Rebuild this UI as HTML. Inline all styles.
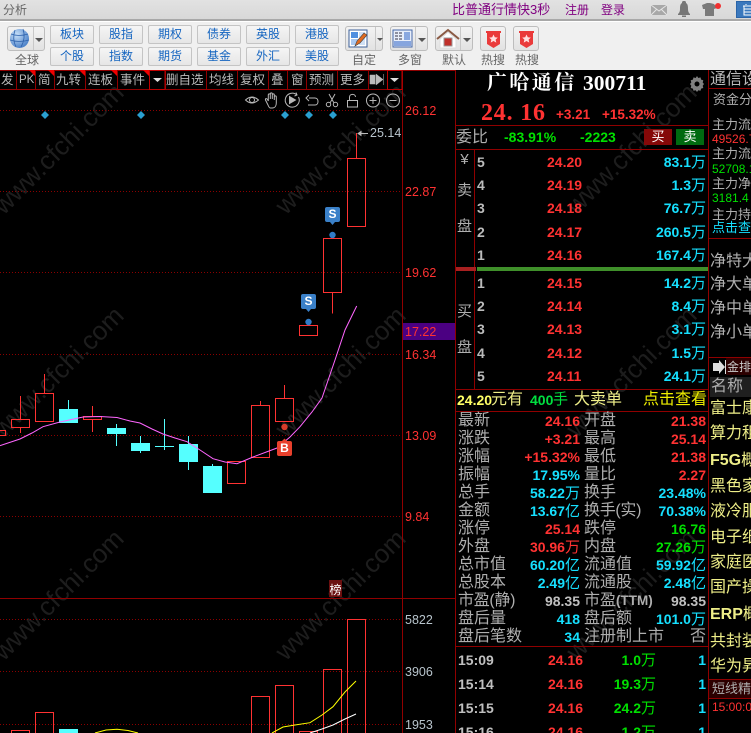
<!DOCTYPE html>
<html lang="zh"><head><meta charset="utf-8"><title>分析</title>
<style>
html,body{margin:0;padding:0;background:#000;width:751px;height:733px;overflow:hidden}
#p{position:relative;width:751px;height:733px;overflow:hidden;background:#000;font-family:"Liberation Sans","WenQuanYi Zen Hei","Noto Sans CJK SC",sans-serif}
#p div,#p span.a,#p b.a{position:absolute;white-space:nowrap}
svg{position:absolute;left:0;top:0}
.wm{color:#1d1d1d;font-size:26px;line-height:30px;transform-origin:0 100%;transform:rotate(-45deg);font-family:"Liberation Sans",sans-serif}
.btn{background:linear-gradient(#f5f5f5,#e6e6e6);border:1px solid #c4c4c4;border-radius:2px;box-sizing:border-box;height:19px;width:44px;color:#1565c0;font-size:12px;line-height:17px;text-align:center}
.ib{background:linear-gradient(#f3f3f3,#e2e2e2);border:1px solid #bdbdbd;border-radius:3px;box-sizing:border-box;height:25px;top:26px}
.lb{color:#666;font-size:12px;line-height:16px;top:52px}
.tb{color:#bbb;font-size:12.5px;line-height:16px;top:72px}
.ax{color:#ff3232;font-size:12.5px;line-height:14px;left:405px;font-family:"Liberation Sans",sans-serif}
.axg{color:#b8c4cc;font-size:12.5px;line-height:14px;left:405px}
.o{color:#bbb;font:bold 14px/16px "Liberation Sans",sans-serif;left:477px}
.pr{color:#ff3232;font:bold 14px/16px "Liberation Sans",sans-serif;left:547px}
.v{color:#16e0ff;font:bold 14px/16px "Liberation Sans",sans-serif;right:45px}
.v i,.q i{font:normal 15px/16px "WenQuanYi Zen Hei","Noto Sans CJK SC",sans-serif}
.sd{color:#b0b0b0;font-size:15px;line-height:18px;left:456px;width:17px;text-align:center}
.l{color:#aeaeae;font-size:16px;line-height:18px}
.q{font:bold 14px/18px "Liberation Sans",sans-serif}
.R{right:171px}.RR{right:45px}
.re{color:#ff3232}.cy{color:#16e0ff}.gr{color:#00e000}.gy{color:#c0c0c0}
.s{color:#aeaeae;font-size:13px;line-height:15px;left:712px}
.n{color:#aeaeae;font-size:16px;line-height:18px;left:710px}
.y{color:#eeee88;font-size:16px;line-height:18px;left:710px}
.y b{font-family:"Liberation Sans",sans-serif}
</style></head><body><div id="p">

<!-- top chrome -->
<div style="left:0;top:0;width:751px;height:19px;background:linear-gradient(#e2e2e2,#d8d8d8)"></div>
<div style="left:0;top:19px;width:751px;height:2px;background:#a8a8a8"></div>
<div style="left:0;top:21px;width:751px;height:49px;background:#f0f0f0;border-top:1px solid #fff;box-sizing:border-box"></div>
<div style="left:3px;top:1px;color:#666;font-size:12px;line-height:18px">分析</div>
<div style="left:452px;top:2px;color:#800080;font-size:13px;line-height:16px">比普通行情快3秒</div>
<div style="left:565px;top:2px;color:#800080;font-size:12px;line-height:16px">注册</div>
<div style="left:601px;top:2px;color:#800080;font-size:12px;line-height:16px">登录</div>
<svg width="751" height="22">
 <rect x="651" y="5" width="16" height="10" fill="#a8a8a8"/><path d="M651 5l8 6 8-6M651 15l6-6M667 15l-6-6" fill="none" stroke="#e6e6e6"/>
 <path d="M684 1c2 0 2 1 2 2 2 1 2 4 2 6 0 3 1 4 2 5v1h-12v-1c1-1 2-2 2-5 0-2 0-5 2-6 0-1 0-2 2-2zM682 15.500h4v1.500h-4z" fill="#777"/>
 <path d="M702 5l5-2h3l4 1 3 4-3 1v7h-9v-7l-2 0z" fill="#7a7a7a"/><circle cx="718" cy="6" r="3" fill="#f03030"/>
 <rect x="736" y="1" width="15" height="17" fill="#2a64a8"/><rect x="737" y="2" width="14" height="15" fill="#3a78bd"/>
 <path d="M746 4v1M743 6h8M744 6v9h7M744 9h7M744 12h7" stroke="#fff" fill="none"/>
</svg>

<!-- toolbar -->
<div class="btn" style="left:50px;top:25px">板块</div><div class="btn" style="left:99px;top:25px">股指</div><div class="btn" style="left:148px;top:25px">期权</div><div class="btn" style="left:197px;top:25px">债券</div><div class="btn" style="left:246px;top:25px">英股</div><div class="btn" style="left:295px;top:25px">港股</div>
<div class="btn" style="left:50px;top:47px">个股</div><div class="btn" style="left:99px;top:47px">指数</div><div class="btn" style="left:148px;top:47px">期货</div><div class="btn" style="left:197px;top:47px">基金</div><div class="btn" style="left:246px;top:47px">外汇</div><div class="btn" style="left:295px;top:47px">美股</div>

<div class="ib" style="left:7px;width:38px"></div>
<div class="ib" style="left:345px;width:38px"></div>
<div class="ib" style="left:390px;width:38px"></div>
<div class="ib" style="left:435px;width:38px"></div>
<div class="ib" style="left:480px;width:26px"></div>
<div class="ib" style="left:513px;width:26px"></div>
<svg width="751" height="70">
 <defs><radialGradient id="g" cx=".35" cy=".3" r=".8"><stop offset="0" stop-color="#c8e0f8"/><stop offset="1" stop-color="#3f78c4"/></radialGradient></defs>
 <path d="M33.500 27v23M375.500 27v23M415.500 27v23M460.500 27v23" stroke="#c8c8c8"/>
 <path d="M35 38h8l-4 4zM377 38h6l-3 3zM418 38h8l-4 4zM463 38h8l-4 4z" fill="#555"/>
 <circle cx="19.500" cy="38.500" r="9.500" fill="url(#g)"/>
 <path d="M11 34q8 3 17 0M10 40q9 3 19 0M15 30q-3 9 1 17M23 29q3 9-2 18" fill="none" stroke="#2f63ad" stroke-width=".8"/>
 <!-- custom -->
 <rect x="349" y="30" width="18" height="17" fill="#fff" stroke="#3b5f98"/><rect x="351" y="32" width="7" height="6" fill="#4f8fe0"/><rect x="351" y="39" width="7" height="6" fill="#a9c8f0"/><rect x="359" y="32" width="6" height="13" fill="#cfe0f5"/>
 <path d="M355 46l2-5 7-8 3 2-7 8z" fill="#e06a20" stroke="#444" stroke-width=".6"/>
 <!-- multi -->
 <rect x="393" y="30" width="19" height="17" fill="#e8eefa" stroke="#4668a8"/><path d="M395 33h3M395 36h3M395 39h3M399 33h3M399 36h3M399 39h3" stroke="#334" fill="none"/>
 <rect x="404" y="32" width="6" height="8" fill="#8aa8e0"/><rect x="394" y="41" width="17" height="5" fill="#86a5de"/>
 <!-- home -->
 <path d="M437 39l11-9 11 9" fill="none" stroke="#8a5a44" stroke-width="2"/><path d="M440 39l8-7 8 7v9h-16z" fill="#fff" stroke="#ddd"/><rect x="444" y="38" width="8" height="8" fill="#c0302a" stroke="#999"/>
 <!-- ribbons -->
 <g id="r1"><path d="M486 31h15v2h-1v11l-6.500 4-6.500-4v-11h-1z" fill="#ea3a3a"/><path d="M493.500 34.500l1.300 2.800 3 .3-2.200 2 .7 3-2.800-1.600-2.800 1.600.7-3-2.200-2 3-.3z" fill="#ffe0e0"/></g>
 <g transform="translate(33)"><path d="M486 31h15v2h-1v11l-6.500 4-6.500-4v-11h-1z" fill="#ea3a3a"/><path d="M493.500 34.500l1.300 2.800 3 .3-2.200 2 .7 3-2.800-1.600-2.800 1.600.7-3-2.200-2 3-.3z" fill="#ffe0e0"/></g>
</svg>
<div class="lb" style="left:15px">全球</div><div class="lb" style="left:352px">自定</div><div class="lb" style="left:398px">多窗</div><div class="lb" style="left:442px">默认</div><div class="lb" style="left:481px">热搜</div><div class="lb" style="left:515px">热搜</div>

<!-- watermarks -->
<div class="wm" style="left:8px;top:190px">www.cfchi.com</div>
<div class="wm" style="left:290px;top:190px">www.cfchi.com</div>
<div class="wm" style="left:581px;top:190px">www.cfchi.com</div>
<div class="wm" style="left:8px;top:413px">www.cfchi.com</div>
<div class="wm" style="left:290px;top:413px">www.cfchi.com</div>
<div class="wm" style="left:581px;top:413px">www.cfchi.com</div>
<div class="wm" style="left:8px;top:636px">www.cfchi.com</div>
<div class="wm" style="left:290px;top:636px">www.cfchi.com</div>
<div class="wm" style="left:581px;top:636px">www.cfchi.com</div>

<!-- chart -->
<svg width="751" height="733">
 <g stroke="#8b0000" stroke-dasharray="1 2" fill="none">
  <path d="M0 110.500H402M0 191.500H402M0 272.500H402M0 354.500H402M0 435.500H402M0 516.500H402M0 619.500H402M0 671.500H402M0 724.500H402"/>
 </g>
 <!-- frame lines -->
 <g stroke="#900000" fill="none">
  <path d="M0 70.500H455M0 89.500H402M402.500 70V733M455.500 70V733M708.500 70V733M0 598.500H455"/>
  <path d="M16.500 70v20M35.500 70v20M54.500 70v20M85.500 70v20M117.500 70v20M149.500 70v20M165.500 70v20M206.500 70v20M237.500 70v20M268.500 70v20M287.500 70v20M306.500 70v20M337.500 70v20M368.500 70v20M387.500 70v20"/>
  <path d="M456 125.500H708M456 149.500H708M456 389.500H708M456 411.500H708M456 646.500H708M474.500 149V389M709 88.500H751M709 238.500H751M709 357.500H751M709 679.500H751M709 698.500H751"/>
 </g>
 <path d="M149.500 70.500h15.500v19h-15.500zM387.500 70.500h14.500v19h-14.500z" fill="none" stroke="#c00000"/>
 <path d="M29 70h6v6zM48 70h6v6zM79 70h6v6zM111 70h6v6zM143 70h6v6z" fill="#f00000"/>
 <path d="M153 78h9l-4.500 4z" fill="#ddd"/><path d="M390 78h9l-4.500 4z" fill="#ddd"/>
 <path d="M370 75h5v9h-5zM376 74l7 5.500-7 5.500zM383.500 74v11" fill="#bbb" stroke="#bbb" stroke-width=".5"/>

 <!-- chart tools -->
 <g fill="none" stroke="#b8b8b8" stroke-width="1">
  <path d="M245.500 100q6.500-6 13 0q-6.500 6-13 0z"/><circle cx="252" cy="100" r="2.500"/>
  <path d="M268 105l-2.500-5c-.5-1.500 1-2 2-.5l.8 1.500v-6c0-1.500 2-1.500 2 0v4-5c0-1.500 2-1.500 2 0v5-4c0-1.500 2-1.500 2 0v5-3c0-1.500 2-1.500 2 0v6c0 3-1.500 5-4 5h-2c-1 0-1.500-1-2.300-3z"/>
  <path d="M297 95a7 7 0 1 0 1.500 2M296 92.500l1 2.500-2.500 1"/><path d="M289.500 96.500l6 3.500-6 3.500z" fill="#b8b8b8"/>
  <path d="M309 98h6c4 0 4 7 0 7h-7M309 95l-3 3 3 3" transform="translate(0,0)"/>
  <circle cx="328.500" cy="104.500" r="2.200"/><circle cx="335.500" cy="104.500" r="2.200"/><path d="M330 103l5-9M334 103l-5-9"/>
  <rect x="347.500" y="100.500" width="10" height="6.500"/><path d="M349.500 100v-3c0-3.500 6-3.500 6 0"/>
  <circle cx="373" cy="100.500" r="6.500"/><path d="M369.500 100.500h7M373 97v7"/>
  <circle cx="393" cy="100.500" r="6.500"/><path d="M389.500 100.500h7"/>
 </g>
 <g fill="#2a9fd0"><path d="M45 111l4 4-4 4-4-4zM141 111l4 4-4 4-4-4zM285 111l4 4-4 4-4-4zM309 111l4 4-4 4-4-4zM333 111l4 4-4 4-4-4z"/></g>

 <!-- candles -->
 <g fill="none" stroke="#ff3232" shape-rendering="crispEdges">
  <path d="M-20 430.500h25.500v5h-25.500z"/>
  <rect x="11.500" y="419.500" width="18" height="8"/><path d="M20.500 396v23.500M20.500 427.500v5.500"/>
  <rect x="35.500" y="393.500" width="18" height="28"/><path d="M44.500 374v19.500"/>
  <rect x="83.500" y="416.500" width="18" height="3"/><path d="M92.500 406v10.500M92.500 419.500v12.500"/>
  <rect x="227.500" y="461.500" width="18" height="22"/>
  <rect x="251.500" y="405.500" width="18" height="52"/><path d="M260.500 401v4.500"/>
  <rect x="275.500" y="398.500" width="18" height="23"/><path d="M284.500 385v13.500"/>
  <rect x="299.500" y="325.500" width="18" height="10"/>
  <rect x="323.500" y="238.500" width="18" height="54"/><path d="M332.500 292.500v21"/>
  <rect x="347.500" y="158.500" width="18" height="68"/><path d="M356.500 133v25.500"/>
  <!-- volume -->
  <rect x="11.500" y="730.500" width="18" height="20"/>
  <rect x="35.500" y="712.500" width="18" height="40"/>
  <rect x="251.500" y="696.500" width="18" height="60"/>
  <rect x="275.500" y="685.500" width="18" height="70"/>
  <rect x="299.500" y="731.500" width="18" height="20"/>
  <rect x="323.500" y="669.500" width="18" height="90"/>
  <rect x="347.500" y="619.500" width="18" height="140"/>
 </g>
 <g fill="#55ffff" shape-rendering="crispEdges">
  <rect x="59" y="409" width="19" height="14"/><rect x="68" y="400" width="1" height="9"/>
  <rect x="107" y="428" width="19" height="6"/><rect x="116" y="424" width="1" height="22"/>
  <rect x="131" y="443" width="19" height="8"/><rect x="140" y="436" width="1" height="17"/>
  <rect x="155" y="446" width="19" height="1"/><rect x="164" y="419" width="1" height="31"/>
  <rect x="179" y="444" width="19" height="18"/><rect x="188" y="436" width="1" height="34"/>
  <rect x="203" y="466" width="19" height="27"/><rect x="212" y="464" width="1" height="2"/>
  <rect x="59" y="729" width="19" height="4"/>
 </g>
 <path d="M0 445.700L20 439 32 433 43 426.700 60 422 83 417 100 416.500 117 417.500 130 421 140 423 152 429 163 434 175 438 187 441.700 200 450 213 458.700 225 462 237 463.700 253 457 277 448 290 437 300 426.700 312 412 322 398 335 360 345 330 356.700 306" fill="none" stroke="#ff66ff"/>
 <path d="M95 733L106 730 117 729.300 128 730.500 138 733M272 733L283 727 295 725 310 722.700 322 715 333 706.700 345 692 356 681" fill="none" stroke="#ffff00"/>
 <path d="M310 733L322 729 333 725 345 719 356 714" fill="none" stroke="#fff"/>

 <!-- markers -->
 <circle cx="284.500" cy="427" r="3.200" fill="#d63c2a"/>
 <rect x="277" y="441" width="15" height="15" rx="2" fill="#e8402c"/><path d="M284.500 438.500l2.500 2.500h-5z" fill="#e8402c"/>
 <circle cx="308.500" cy="322" r="3.200" fill="#2f7cc8"/><circle cx="332.500" cy="235" r="3.200" fill="#2f7cc8"/>
 <rect x="301" y="294" width="15" height="15" rx="2" fill="#3a80c8"/><path d="M306 309h5l-2.500 3z" fill="#3a80c8"/>
 <rect x="325" y="207" width="15" height="15" rx="2" fill="#3a80c8"/><path d="M330 222h5l-2.500 3z" fill="#3a80c8"/>
 <path d="M358 133.500h10M358 133.500l3-2v4z" stroke="#bbb" fill="#bbb"/>
 <rect x="403" y="323" width="52" height="17" fill="#4b0082"/>

 <!-- panel misc -->
 <rect x="456" y="267" width="20" height="4" fill="#a82020"/><rect x="477" y="267" width="231" height="4" fill="#3f8f2a"/>
 <path d="M697 76l1.300 2 2.200-.6.600 2.200 2.200.6-.6 2.300 1.300 1.500-1.300 1.800.6 2.200-2.200.6-.6 2.200-2.200-.6-1.300 1.800-1.300-1.800-2.200.6-.6-2.200-2.200-.6.600-2.200-1.300-1.800 1.300-1.500-.6-2.300 2.200-.6.600-2.200 2.200.6z" fill="#808080"/><circle cx="697" cy="84" r="2.500" fill="#000"/>
 <rect x="644" y="129" width="28" height="16" fill="#850808"/><rect x="676" y="129" width="28" height="16" fill="#006a10"/>
 <rect x="726" y="358" width="25" height="17" fill="#2c0000"/>
 <rect x="710" y="377" width="41" height="20" fill="#1f1f1f"/>
 <rect x="709" y="680" width="42" height="18" fill="#2c0000"/>
 <path d="M713 363h6v-3l6 7-6 7v-3h-6z" fill="#ddd"/><path d="M725.500 360v14" stroke="#ddd"/>
</svg>

<!-- tabs -->
<div class="tb" style="left:1px">发</div><div class="tb" style="left:19px;font-size:11.5px">PK</div><div class="tb" style="left:38px">简</div><div class="tb" style="left:56px">九转</div><div class="tb" style="left:88px">连板</div><div class="tb" style="left:120px">事件</div><div class="tb" style="left:166px">删自选</div><div class="tb" style="left:209px">均线</div><div class="tb" style="left:240px">复权</div><div class="tb" style="left:271px">叠</div><div class="tb" style="left:291px">窗</div><div class="tb" style="left:309px">预测</div><div class="tb" style="left:340px">更多</div>

<!-- axis -->
<div class="ax" style="top:104px">26.12</div><div class="ax" style="top:185px">22.87</div><div class="ax" style="top:266px">19.62</div><div class="ax" style="top:325px">17.22</div><div class="ax" style="top:348px">16.34</div><div class="ax" style="top:429px">13.09</div><div class="ax" style="top:510px">9.84</div>
<div class="axg" style="top:613px">5822</div><div class="axg" style="top:665px">3906</div><div class="axg" style="top:718px">1953</div>
<div style="left:370px;top:126px;color:#b8c4cc;font-size:12.5px;line-height:14px">25.14</div>
<div style="left:279px;top:441px;width:11px;text-align:center;color:#fff;font:bold 12px/15px 'Liberation Sans',sans-serif">B</div>
<div style="left:303px;top:294px;width:11px;text-align:center;color:#fff;font:bold 12px/15px 'Liberation Sans',sans-serif">S</div>
<div style="left:327px;top:207px;width:11px;text-align:center;color:#fff;font:bold 12px/15px 'Liberation Sans',sans-serif">S</div>
<div style="left:329px;top:580px;width:13px;height:17px;background:#6b0f0f;color:#fff;font-size:12px;line-height:20px;text-align:center">榜</div>

<!-- header -->
<div style="left:487px;top:71px;color:#fff;font:bold 20px/24px 'Liberation Serif','Noto Serif CJK SC',serif;letter-spacing:2.400px">广哈通信</div>
<div style="left:583px;top:71px;color:#fff;font:bold 21.500px/24px 'Liberation Serif',serif">300711</div>
<div style="left:481px;top:99px;color:#ff3232;font:bold 24px/28px 'Liberation Serif',serif;letter-spacing:.8px">24. 16</div>
<div style="left:556px;top:107px;color:#ff3232;font:bold 13.500px/16px 'Liberation Sans',sans-serif">+3.21</div>
<div style="left:602px;top:107px;color:#ff3232;font:bold 13.500px/16px 'Liberation Sans',sans-serif">+15.32%</div>

<div style="left:456px;top:129px;color:#aeaeae;font-size:16px;line-height:18px">委比</div>
<div style="left:504px;top:129px;color:#00e000;font:bold 14px/16px 'Liberation Sans',sans-serif">-83.91%</div>
<div style="left:580px;top:129px;color:#00e000;font:bold 14px/16px 'Liberation Sans',sans-serif">-2223</div>
<div style="left:644px;top:129px;width:28px;text-align:center;color:#fff;font-size:13px;line-height:16px">买</div>
<div style="left:676px;top:129px;width:28px;text-align:center;color:#fff;font-size:13px;line-height:16px">卖</div>

<!-- order book -->
<div class="sd" style="top:151px">¥</div><div class="sd" style="top:182px">卖</div><div class="sd" style="top:218px">盘</div><div class="sd" style="top:303px">买</div><div class="sd" style="top:339px">盘</div>

<div class="o" style="top:154px">5</div><div class="pr" style="top:154px">24.20</div><div class="v" style="top:154px">83.1<i>万</i></div>
<div class="o" style="top:177px">4</div><div class="pr" style="top:177px">24.19</div><div class="v" style="top:177px">1.3<i>万</i></div>
<div class="o" style="top:200px">3</div><div class="pr" style="top:200px">24.18</div><div class="v" style="top:200px">76.7<i>万</i></div>
<div class="o" style="top:224px">2</div><div class="pr" style="top:224px">24.17</div><div class="v" style="top:224px">260.5<i>万</i></div>
<div class="o" style="top:247px">1</div><div class="pr" style="top:247px">24.16</div><div class="v" style="top:247px">167.4<i>万</i></div>
<div class="o" style="top:275px">1</div><div class="pr" style="top:275px">24.15</div><div class="v" style="top:275px">14.2<i>万</i></div>
<div class="o" style="top:298px">2</div><div class="pr" style="top:298px">24.14</div><div class="v" style="top:298px">8.4<i>万</i></div>
<div class="o" style="top:321px">3</div><div class="pr" style="top:321px">24.13</div><div class="v" style="top:321px">3.1<i>万</i></div>
<div class="o" style="top:345px">4</div><div class="pr" style="top:345px">24.12</div><div class="v" style="top:345px">1.5<i>万</i></div>
<div class="o" style="top:368px">5</div><div class="pr" style="top:368px">24.11</div><div class="v" style="top:368px">24.1<i>万</i></div>

<!-- ad row -->
<div style="left:457px;top:392px;color:#ffff66;font:bold 14px/16px 'Liberation Sans',sans-serif">24.20</div>
<div style="left:491px;top:392px;color:#eeee88;font-size:16px;line-height:16px">元有</div>
<div style="left:530px;top:392px;color:#00e040;font:bold 14px/16px 'Liberation Sans',sans-serif">400</div>
<div style="left:553px;top:392px;color:#00e040;font-size:15px;line-height:16px">手</div>
<div style="left:574px;top:392px;color:#eeee88;font-size:16px;line-height:16px">大卖单</div>
<div style="left:643px;top:392px;color:#eeee00;font-size:16px;line-height:16px">点击查看</div>

<!-- stats -->
<div class="l" style="left:458px;top:412px">最新</div><div class="q re R" style="top:412px">24.16</div><div class="l" style="left:584px;top:412px">开盘</div><div class="q re RR" style="top:412px">21.38</div>
<div class="l" style="left:458px;top:430px">涨跌</div><div class="q re R" style="top:430px">+3.21</div><div class="l" style="left:584px;top:430px">最高</div><div class="q re RR" style="top:430px">25.14</div>
<div class="l" style="left:458px;top:448px">涨幅</div><div class="q re R" style="top:448px">+15.32%</div><div class="l" style="left:584px;top:448px">最低</div><div class="q re RR" style="top:448px">21.38</div>
<div class="l" style="left:458px;top:466px">振幅</div><div class="q cy R" style="top:466px">17.95%</div><div class="l" style="left:584px;top:466px">量比</div><div class="q re RR" style="top:466px">2.27</div>
<div class="l" style="left:458px;top:484px">总手</div><div class="q cy R" style="top:484px">58.22<i>万</i></div><div class="l" style="left:584px;top:484px">换手</div><div class="q cy RR" style="top:484px">23.48%</div>
<div class="l" style="left:458px;top:502px">金额</div><div class="q cy R" style="top:502px">13.67<i>亿</i></div><div class="l" style="left:584px;top:502px;letter-spacing:-.3px">换手(实)</div><div class="q cy RR" style="top:502px">70.38%</div>
<div class="l" style="left:458px;top:520px">涨停</div><div class="q re R" style="top:520px">25.14</div><div class="l" style="left:584px;top:520px">跌停</div><div class="q gr RR" style="top:520px">16.76</div>
<div class="l" style="left:458px;top:538px">外盘</div><div class="q re R" style="top:538px">30.96<i>万</i></div><div class="l" style="left:584px;top:538px">内盘</div><div class="q gr RR" style="top:538px">27.26<i>万</i></div>
<div class="l" style="left:458px;top:556px">总市值</div><div class="q cy R" style="top:556px">60.20<i>亿</i></div><div class="l" style="left:584px;top:556px">流通值</div><div class="q cy RR" style="top:556px">59.92<i>亿</i></div>
<div class="l" style="left:458px;top:574px">总股本</div><div class="q cy R" style="top:574px">2.49<i>亿</i></div><div class="l" style="left:584px;top:574px">流通股</div><div class="q cy RR" style="top:574px">2.48<i>亿</i></div>
<div class="l" style="left:458px;top:592px;letter-spacing:-.3px">市盈(静)</div><div class="q gy R" style="top:592px">98.35</div><div class="l" style="left:584px;top:592px">市盈<b style="font:bold 13.500px/18px 'Liberation Sans',sans-serif">(TTM)</b></div><div class="q gy RR" style="top:592px">98.35</div>
<div class="l" style="left:458px;top:610px">盘后量</div><div class="q cy R" style="top:610px">418</div><div class="l" style="left:584px;top:610px">盘后额</div><div class="q cy RR" style="top:610px">101.0<i>万</i></div>
<div class="l" style="left:458px;top:628px">盘后笔数</div><div class="q cy R" style="top:628px">34</div><div class="l" style="left:584px;top:628px">注册制上市</div><div class="l RR" style="top:628px">否</div>

<!-- ticks -->
<div class="q gy" style="left:458px;top:651px">15:09</div><div class="q re" style="right:168px;top:651px">24.16</div><div class="q gr" style="right:95px;top:651px">1.0<i>万</i></div><div class="q cy" style="right:45px;top:651px">1</div>
<div class="q gy" style="left:458px;top:675px">15:14</div><div class="q re" style="right:168px;top:675px">24.16</div><div class="q gr" style="right:95px;top:675px">19.3<i>万</i></div><div class="q cy" style="right:45px;top:675px">1</div>
<div class="q gy" style="left:458px;top:699px">15:15</div><div class="q re" style="right:168px;top:699px">24.16</div><div class="q gr" style="right:95px;top:699px">24.2<i>万</i></div><div class="q cy" style="right:45px;top:699px">1</div>
<div class="q gy" style="left:458px;top:723px">15:16</div><div class="q re" style="right:168px;top:723px">24.16</div><div class="q gr" style="right:95px;top:723px">1.2<i>万</i></div><div class="q cy" style="right:45px;top:723px">1</div>

<!-- right strip -->
<div style="left:710px;top:71px;color:#bbb;font-size:16px;line-height:18px">通信设</div>
<div class="s" style="left:713px;top:92px">资金分布</div>
<div class="s" style="top:117px">主力流入</div>
<div class="s" style="top:132px;color:#ff3232;font-size:12px">49526.7</div>
<div class="s" style="top:146px">主力流出</div>
<div class="s" style="top:162px;color:#00e000;font-size:12px">52708.1</div>
<div class="s" style="top:176px">主力净流</div>
<div class="s" style="top:191px;color:#00e000;font-size:12px">3181.4</div>
<div class="s" style="top:207px">主力持仓</div>
<div class="s" style="top:220px;color:#16e0ff">点击查看</div>
<div class="n" style="top:253px">净特大单</div><div class="n" style="top:276px">净大单</div><div class="n" style="top:300px">净中单</div><div class="n" style="top:324px">净小单</div>
<div style="left:727px;top:359px;color:#ccc;font-size:12px;line-height:16px">金排</div>
<div class="n" style="top:378px;left:711px">名称</div>
<div class="y" style="top:400px">富士康</div><div class="y" style="top:425px">算力租</div>
<div class="y" style="top:452px"><b>F5G</b>概</div><div class="y" style="top:478px">黑色家</div>
<div class="y" style="top:503px">液冷服</div><div class="y" style="top:529px">电子纸</div>
<div class="y" style="top:554px">家庭医</div><div class="y" style="top:579px">国产操</div>
<div class="y" style="top:606px"><b>ERP</b>概</div><div class="y" style="top:633px">共封装</div>
<div class="y" style="top:658px">华为昇</div>
<div style="left:712px;top:681px;color:#aeaeae;font-size:13px;line-height:16px">短线精选</div>
<div style="left:712px;top:700px;color:#ff3232;font-size:12px;line-height:14px">15:00:00</div>

</div></body></html>
